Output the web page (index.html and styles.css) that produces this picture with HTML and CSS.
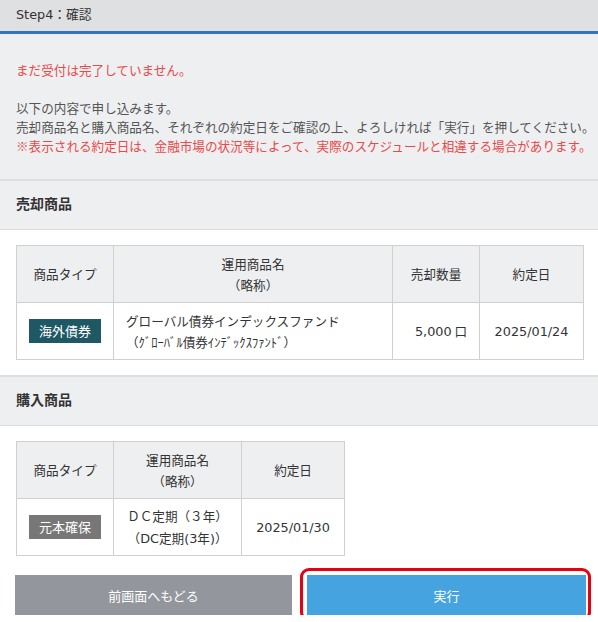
FILE: index.html
```html
<!DOCTYPE html>
<html lang="ja">
<head>
<meta charset="utf-8">
<title>Step4：確認</title>
<link rel="stylesheet" href="styles.css">
</head>
<body>
<div class="step-header">Step4：確認</div>
<div class="notice">
  <p class="red first">まだ受付は完了していません。</p>
  <p>以下の内容で申し込みます。<br>売却商品名と購入商品名、それぞれの約定日をご確認の上、よろしければ「実行」を押してください。<br><span class="red"><span class="cjk">※</span>表示される約定日は、金融市場の状況等によって、実際のスケジュールと相違する場合があります。</span></p>
</div>

<div class="sec-title">売却商品</div>
<div class="sec-body">
  <table class="tbl tbl-sell">
    <colgroup><col class="c1"><col class="c2"><col class="c3"><col class="c4"></colgroup>
    <tr class="head">
      <th>商品タイプ</th>
      <th>運用商品名<br>（略称）</th>
      <th>売却数量</th>
      <th>約定日</th>
    </tr>
    <tr class="body">
      <td class="center"><span class="badge teal">海外債券</span></td>
      <td class="name"><div class="n1">グローバル債券インデックスファンド</div><div class="n2">（ｸﾞﾛｰﾊﾞﾙ債券ｲﾝﾃﾞｯｸｽﾌｧﾝﾄﾞ）</div></td>
      <td class="right"><span class="num">5,000</span> 口</td>
      <td class="center"><span class="num">2025/01/24</span></td>
    </tr>
  </table>
</div>

<div class="sec-title">購入商品</div>
<div class="sec-body last">
  <table class="tbl tbl-buy">
    <colgroup><col class="c1"><col class="b2"><col class="b3"></colgroup>
    <tr class="head">
      <th>商品タイプ</th>
      <th>運用商品名<br>（略称）</th>
      <th>約定日</th>
    </tr>
    <tr class="body">
      <td class="center"><span class="badge gray">元本確保</span></td>
      <td class="center">ＤＣ定期（３年）<br>（<span class="num">DC</span>定期<span class="num">(3</span>年<span class="num">)</span>）</td>
      <td class="center"><span class="num">2025/01/30</span></td>
    </tr>
  </table>
</div>

<div class="buttons">
  <button class="btn back" type="button">前画面へもどる</button>
  <div class="exec-wrap"><button class="btn exec" type="button">実行</button></div>
</div>
</body>
</html>
```

FILE: styles.css
```css
html, body {
  margin: 0;
  padding: 0;
  background: #ffffff;
}
body {
  font-family: "Noto Sans CJK JP", "Noto Sans", sans-serif;
  font-size: 12.6px;
  color: #555555;
}
.num, .latin {
  font-family: "DejaVu Sans", "Noto Sans CJK JP", sans-serif;
  font-size: 12.8px;
}
.cjk {
  font-family: "Noto Sans CJK JP", sans-serif;
}
.step-header {
  background: #dfe0e2;
  height: 31px;
  line-height: 30px;
  padding-left: 16px;
  font-family: "DejaVu Sans", "Noto Sans CJK JP", sans-serif;
  font-size: 12.8px;
  color: #333333;
  border-bottom: 3px solid #3572c4;
}
.notice {
  background: #eeeff1;
  padding: 26px 0 24px 16px;
  line-height: 19px;
  white-space: nowrap;
}
.notice p {
  margin: 0;
}
.notice p.first {
  margin-bottom: 19px;
}
.red {
  color: #e94a4a;
}
.sec-title {
  background: #eeeff1;
  border-top: 2px solid #dddee0;
  border-bottom: 1px solid #dcdde0;
  height: 46px;
  line-height: 45px;
  padding-bottom: 2px;
  padding-left: 16px;
  font-size: 14px;
  font-weight: bold;
  color: #333333;
}
.sec-body {
  padding: 15px 14px 15px 16px;
}
.sec-body.last {
  padding-bottom: 0;
}
.tbl {
  border-collapse: collapse;
  color: #333333;
  line-height: 21.5px;
}
.tbl-sell { width: 568px; }
.tbl-buy { width: 329px; }
.tbl col.c1 { width: 97px; }
.tbl col.c2 { width: 280px; }
.tbl col.c3 { width: 87px; }
.tbl col.c4 { width: 104px; }
.tbl col.b2 { width: 129px; }
.tbl col.b3 { width: 103px; }
.tbl th, .tbl td {
  border: 1px solid #d0d0d0;
  padding: 0 12px;
}
.tbl th {
  background: #eeeff1;
  font-weight: normal;
  text-align: center;
}
.tbl tr.head { height: 57px; }
.tbl tr.body { height: 57px; }
.tbl td.center { text-align: center; }
.tbl td.right { text-align: right; }
.tbl td.name { text-align: left; }
.badge {
  display: inline-block;
  width: 72px;
  height: 24px;
  line-height: 24px;
  color: #ffffff;
  font-size: 13px;
  text-align: center;
  vertical-align: middle;
}
.badge.teal { background: #1f5865; }
.badge.gray { background: #777777; }
.buttons {
  display: flex;
  gap: 15px;
  padding: 19px 12px 0 15px;
}
.btn {
  display: block;
  border: 0;
  height: 40px;
  font-family: inherit;
  font-size: 13px;
  color: #ffffff;
  cursor: pointer;
  width: 100%;
}
.btn.back {
  flex: 0 0 277px;
  background: #93969d;
}
.exec-wrap {
  flex: 1;
  position: relative;
}
.exec-wrap::after {
  content: "";
  position: absolute;
  left: -7px;
  right: -5px;
  top: -7px;
  bottom: -6px;
  border: 3.5px solid #e60012;
  border-radius: 9px;
  pointer-events: none;
}
.btn.exec {
  background: #45a4df;
}
```
